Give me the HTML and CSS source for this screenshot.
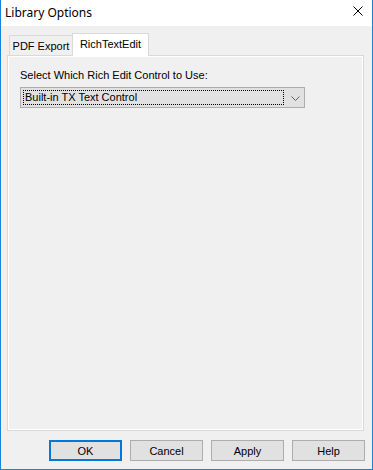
FILE: index.html
```html
<!DOCTYPE html>
<html lang="en">
<head>
    <meta charset="UTF-8">
    <title>Library Options</title>
    <link rel="stylesheet" href="styles.css">
</head>
<body>

    <div class="window">
        <div class="titlebar">
            <span class="title">Library Options</span>
            <svg class="close" width="10" height="10" viewBox="0 0 10 10">
                <path d="M0.5 0.5 L9.5 9.5 M9.5 0.5 L0.5 9.5" stroke="#000" stroke-width="1" fill="none"/>
            </svg>
        </div>

        <div class="client">
            <div class="tabs">
                <div class="tab">PDF Export</div>
                <div class="tab active">RichTextEdit</div>
            </div>

            <div class="panel">
                <label class="label">Select Which Rich Edit Control to Use:</label>
                <div class="combo">
                    <div class="combo-value">Built-in TX Text Control</div>
                    <svg class="chevron" width="9" height="5" viewBox="0 0 9 5">
                        <path d="M0.5 0.5 L4.5 4.5 L8.5 0.5" stroke="#606060" stroke-width="1" fill="none"/>
                    </svg>
                </div>
            </div>

            <div class="buttons">
                <button class="btn default">OK</button>
                <button class="btn">Cancel</button>
                <button class="btn">Apply</button>
                <button class="btn">Help</button>
            </div>
        </div>
    </div>

</body>
</html>
```

FILE: styles.css
```css
* {
    box-sizing: border-box;
}

html, body {
    margin: 0;
    padding: 0;
    background-color: #ffffff;
}

.window {
    width: 373px;
    height: 470px;
    display: flex;
    flex-direction: column;
    border: 1px solid #1883d7;
    border-top: none;
    font-family: "Liberation Sans", Arial, sans-serif;
    font-size: 11px;
    color: #000000;
}

.titlebar {
    height: 26px;
    display: flex;
    align-items: center;
    justify-content: space-between;
    padding: 0 9px 0 4px;
    background-color: #ffffff;
}

.title {
    font-family: "Noto Sans", sans-serif;
    font-size: 12px;
    margin-top: -1px;
}

.close {
    display: block;
    margin-top: -4px;
}

.client {
    flex: 1;
    display: flex;
    flex-direction: column;
    padding: 7px 8px 8px 6px;
    background-color: #f0f0f0;
}

.tabs {
    height: 22px;
    display: flex;
    align-items: flex-end;
    padding-left: 2px;
}

.tab {
    height: 20px;
    width: 64px;
    display: flex;
    align-items: center;
    justify-content: center;
    padding-top: 1px;
    border: 1px solid #d9d9d9;
    border-bottom: none;
    background-color: #f0f0f0;
}

.tab.active {
    position: relative;
    z-index: 1;
    height: 23px;
    width: 77px;
    margin-left: -1px;
    margin-bottom: -1px;
    padding-top: 0;
    padding-bottom: 2px;
    background-color: #ffffff;
}

.panel {
    flex: 1;
    display: flex;
    flex-direction: column;
    align-items: flex-start;
    padding: 13px 0 0 12px;
    border: 1px solid #d9d9d9;
    box-shadow: inset 0 0 0 1px #ffffff;
}

.label {
    line-height: 13px;
}

.combo {
    margin-top: 5px;
    width: 285px;
    height: 21px;
    display: flex;
    align-items: center;
    padding: 2px 0 2px 2px;
    border: 1px solid #adadad;
    background-color: #e1e1e1;
}

.combo-value {
    flex: 1;
    height: 15px;
    line-height: 13px;
    padding-left: 1px;
    border: 1px dotted #000000;
}

.chevron {
    display: block;
    margin: 1px 4px 0 7px;
}

.buttons {
    display: flex;
    justify-content: flex-end;
    gap: 8px;
    margin-top: 9px;
    margin-right: -1px;
}

.btn {
    width: 73px;
    height: 21px;
    padding: 0;
    font-family: "Liberation Sans", Arial, sans-serif;
    font-size: 11px;
    color: #000000;
    background-color: #e1e1e1;
    border: 1px solid #adadad;
}

.btn.default {
    border: 2px solid #0078d7;
}
```
